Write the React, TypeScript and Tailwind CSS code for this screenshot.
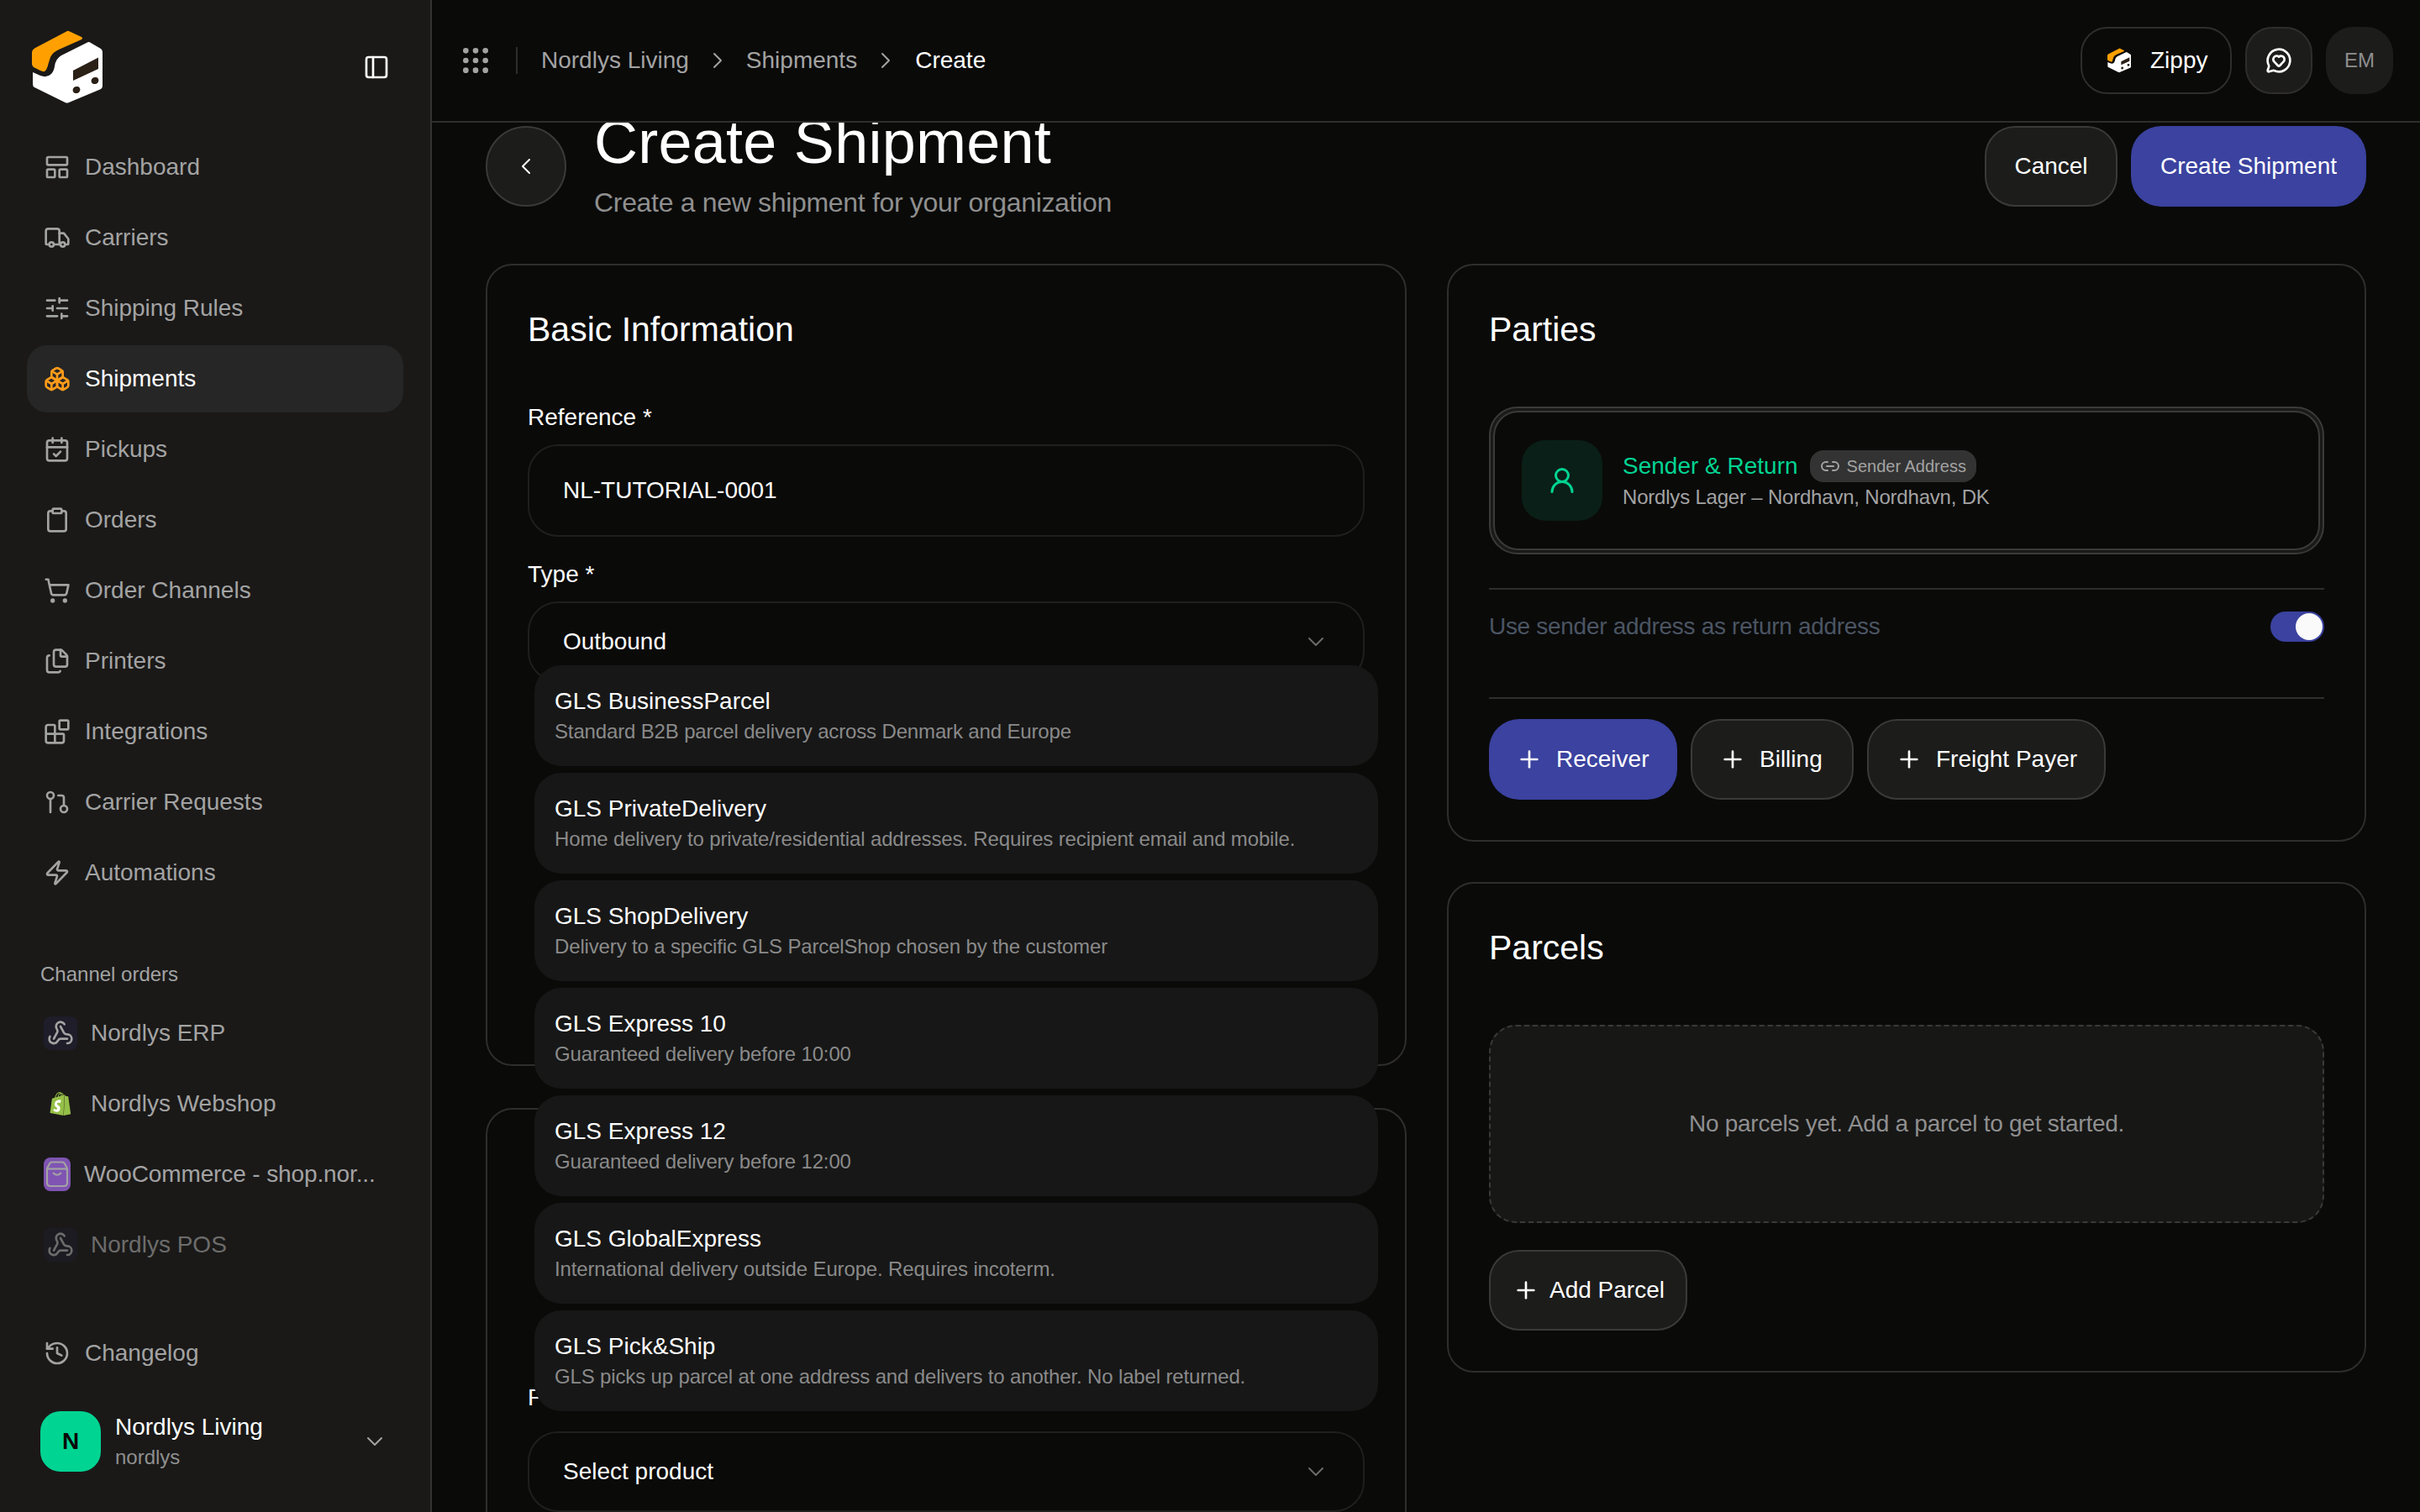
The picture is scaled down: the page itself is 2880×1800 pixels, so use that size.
import {
  Blocks,
  Boxes,
  CalendarCheck,
  ChevronDown,
  ChevronLeft,
  ChevronRight,
  Clipboard,
  Files,
  GitPullRequest,
  Grip,
  History,
  LayoutPanelTop,
  Link2,
  MessageCircleHeart,
  PanelLeft,
  Plus,
  ShoppingCart,
  SlidersHorizontal,
  Truck,
  UserRound,
  Webhook,
  Zap,
} from 'lucide-react';
import { SiShopify } from 'react-icons/si';

const NAV = [
  { label: 'Dashboard', icon: LayoutPanelTop },
  { label: 'Carriers', icon: Truck },
  { label: 'Shipping Rules', icon: SlidersHorizontal },
  { label: 'Shipments', icon: Boxes, active: true },
  { label: 'Pickups', icon: CalendarCheck },
  { label: 'Orders', icon: Clipboard },
  { label: 'Order Channels', icon: ShoppingCart },
  { label: 'Printers', icon: Files },
  { label: 'Integrations', icon: Blocks },
  { label: 'Carrier Requests', icon: GitPullRequest },
  { label: 'Automations', icon: Zap },
];

const PRODUCTS = [
  { name: 'GLS BusinessParcel', desc: 'Standard B2B parcel delivery across Denmark and Europe' },
  { name: 'GLS PrivateDelivery', desc: 'Home delivery to private/residential addresses. Requires recipient email and mobile.' },
  { name: 'GLS ShopDelivery', desc: 'Delivery to a specific GLS ParcelShop chosen by the customer' },
  { name: 'GLS Express 10', desc: 'Guaranteed delivery before 10:00' },
  { name: 'GLS Express 12', desc: 'Guaranteed delivery before 12:00' },
  { name: 'GLS GlobalExpress', desc: 'International delivery outside Europe. Requires incoterm.' },
  { name: 'GLS Pick&Ship', desc: 'GLS picks up parcel at one address and delivers to another. No label returned.' },
];

function Logo({ className }: { className: string }) {
  return (
    <svg viewBox="12 12 96 96" className={className}>
      <path
        d="M60 17 Q61 16.5 63 17.500 L77 24 Q79 25.500 77 27 L50 39 Q43 42 40 48 L37.500 56 Q36 63 33 65 Q31 65.500 28 64 L20 60 Q18 58.500 18 56 L18 43 Q18 39 22 37 Z"
        fill="#ffa000"
      />
      <path
        d="M84 30.500 Q86 29.500 88 31 L100 38 Q102 39.500 102 42 L102 82 Q102 85 99 86.500 L62 102 Q60 103 57.500 102 L21 84 Q19 83 19 80 L19 66 L28 70 Q36 73 41 68 Q44 65 45 59 Q46 50 53 46 Z"
        fill="#ffffff"
      />
      <path d="M67 64 L97 48.500 L97 62 L67 76 Z" fill="#2a2016" />
      <ellipse cx="71" cy="87" rx="4.500" ry="4" transform="rotate(-25 71 87)" fill="#2a2016" />
      <ellipse cx="93" cy="76" rx="4.500" ry="4" transform="rotate(-25 93 76)" fill="#2a2016" />
    </svg>
  );
}

function WooTile() {
  return (
    <span className="w-8 h-10 shrink-0 rounded-[8px] bg-[#7f54b3] flex items-center justify-center">
      <svg viewBox="0 0 32 40" className="w-8 h-10" fill="none" stroke="#a3a3a3" strokeWidth="2.200">
        <path d="M4 13 L7.500 6.500 Q8 5.500 10 5.500 H22 Q24 5.500 24.500 6.500 L28 13 V30 Q28 34 24 34 H8 Q4 34 4 30 Z" />
        <path d="M4 13.500 H28" />
        <path d="M11 18 Q16 23.500 21 18" />
      </svg>
    </span>
  );
}

function Sidebar() {
  return (
    <aside className="w-[514px] h-[1800px] shrink-0 bg-[#1a1918] border-r-2 border-[#333231] flex flex-col">
      <div className="h-[96px] mt-8 ml-8 mr-12 flex items-center justify-between">
        <Logo className="w-24 h-24" />
        <PanelLeft className="w-8 h-8 text-white" strokeWidth={2} />
      </div>

      <nav className="mt-[31px] mx-8 flex flex-col gap-1">
        {NAV.map((item) => (
          <a
            key={item.label}
            className={`h-20 px-5 rounded-[24px] flex items-center gap-[17px] text-[28px] ${
              item.active ? 'bg-[#262626] text-white' : 'text-[#a3a3a3]'
            }`}
          >
            <item.icon className={`w-8 h-8 ${item.active ? 'text-[#ff9c1a]' : 'text-[#a3a3a3]'}`} />
            {item.label}
          </a>
        ))}
      </nav>

      <div className="mt-[65px] ml-12 h-8 leading-8 text-2xl text-[#a3a3a3]">Channel orders</div>

      <div className="mt-[14px] mx-8 flex flex-col gap-1 text-[28px] text-[#a3a3a3]">
        <a className="h-20 pl-5 flex items-center gap-4">
          <span className="w-10 h-10 rounded-[8px] bg-[#1e1d29] flex items-center justify-center">
            <Webhook className="w-8 h-8" />
          </span>
          Nordlys ERP
        </a>
        <a className="h-20 pl-5 flex items-center gap-4">
          <span className="w-10 h-10 flex items-center justify-center relative">
            <span className="absolute left-[11px] top-[14px] w-3 h-4 bg-white" />
            <SiShopify className="w-7 h-8 text-[#95bf47] relative" />
          </span>
          Nordlys Webshop
        </a>
        <a className="h-20 pl-5 flex items-center gap-4">
          <WooTile />
          <span className="whitespace-nowrap tracking-[-0.12px]">WooCommerce - shop.nor...</span>
        </a>
        <a className="h-20 pl-5 flex items-center gap-4 opacity-60">
          <span className="w-10 h-10 rounded-[8px] bg-[#1e1d29] flex items-center justify-center">
            <Webhook className="w-8 h-8" />
          </span>
          Nordlys POS
        </a>
      </div>

      <a className="mt-[49px] mx-8 h-20 px-5 flex items-center gap-[17px] text-[28px] text-[#a3a3a3]">
        <History className="w-8 h-8" />
        Changelog
      </a>

      <div className="mt-[29px] ml-12 mr-[50px] flex items-center">
        <div className="w-[72px] h-[72px] rounded-[24px] bg-[#00d492] flex items-center justify-center text-[28px] font-bold text-[#0a0a09]">
          N
        </div>
        <div className="ml-[17px] flex-1">
          <div className="text-[28px] leading-9 text-white">Nordlys Living</div>
          <div className="mt-[2px] text-2xl leading-8 text-[#8f8f8f]">nordlys</div>
        </div>
        <ChevronDown className="w-8 h-8 text-[#a3a3a3]" strokeWidth={1.500} />
      </div>
    </aside>
  );
}

function Topbar() {
  return (
    <header className="h-[146px] shrink-0 border-b-2 border-[#2f2e2d] pl-8 pr-8 flex items-center justify-between">
      <div className="flex items-center text-[28px] text-[#a3a3a3]">
        <Grip className="w-10 h-10 text-[#a3a3a3]" />
        <span className="w-0.5 h-8 mx-7 bg-[#2f2e2d]" />
        <span>Nordlys Living</span>
        <ChevronRight className="w-8 h-8 mx-[18px]" strokeWidth={1.500} />
        <span>Shipments</span>
        <ChevronRight className="w-8 h-8 mx-[18px] mr-[19px]" strokeWidth={1.500} />
        <span className="text-white">Create</span>
      </div>
      <div className="flex items-center gap-4">
        <button className="h-20 w-[180px] pl-7 rounded-[32px] border-2 border-[#2f2e2d] flex items-center gap-[21px] text-[28px] text-white">
          <Logo className="w-8 h-8" />
          Zippy
        </button>
        <button className="h-20 w-20 rounded-[32px] bg-[#1c1c1b] border-2 border-[#2f2e2d] flex items-center justify-center">
          <MessageCircleHeart className="w-8 h-8 text-white" />
        </button>
        <div className="h-20 w-20 rounded-[32px] bg-[#1c1c1b] flex items-center justify-center text-2xl text-[#8f8f8f]">
          EM
        </div>
      </div>
    </header>
  );
}

function Select({ label, value, gap }: { label: string; value: string; gap: string }) {
  return (
    <div>
      <div className="h-8 leading-8 text-[28px] text-white">{label}</div>
      <div className={`${gap} h-[96px] px-10 rounded-[36px] border-2 border-[#1f1f1e] flex items-center justify-between text-[28px] text-white`}>
        {value}
        <ChevronDown className="w-8 h-8 text-[#6b6b6b]" strokeWidth={1.500} />
      </div>
    </div>
  );
}

function ProductMenu() {
  return (
    <div className="absolute z-10 left-2 top-[124px] w-[1004px] flex flex-col gap-2">
      {PRODUCTS.map((p) => (
        <div key={p.name} className="h-[120px] px-6 rounded-[32px] bg-[#171717] flex flex-col justify-center">
          <div className="text-[28px] leading-9 text-white">{p.name}</div>
          <div className="mt-[2px] text-2xl leading-8 tracking-[-0.15px] text-[#8a8a8a]">{p.desc}</div>
        </div>
      ))}
    </div>
  );
}

function AddButton({ label, className }: { label: string; className: string }) {
  return (
    <button className={`h-24 pl-8 rounded-[36px] flex items-center gap-4 text-[28px] text-white ${className}`}>
      <Plus className="w-8 h-8" />
      {label}
    </button>
  );
}

export default function App() {
  return (
    <div className="w-[2880px] h-[1800px] overflow-hidden flex bg-[#0a0a09] font-['Liberation_Sans',Arial,sans-serif]">
      <Sidebar />
      <div className="flex-1 min-w-0 flex flex-col">
        <Topbar />
        <main className="flex-1 min-h-0 overflow-hidden pt-1 pl-16 pr-16">
          {/* page header, scrolled a little under the top bar */}
          <div className="flex items-start justify-between mb-[53px]">
            <div className="flex items-start gap-[33px]">
              <button className="w-24 h-24 rounded-full bg-[#1c1c1b] border-2 border-[#3a3a39] flex items-center justify-center text-white">
                <ChevronLeft className="w-8 h-8" strokeWidth={1.500} />
              </button>
              <div className="-mt-[21px]">
                <h1 className="text-[72px] leading-[80px] tracking-[0.25px] text-white">Create Shipment</h1>
                <p className="mt-3 text-[32px] leading-10 tracking-[-0.32px] text-[#8f8f8f]">
                  Create a new shipment for your organization
                </p>
              </div>
            </div>
            <div className="flex gap-4">
              <button className="h-24 w-[158px] rounded-[36px] bg-[#1c1c1b] border-2 border-[#3a3a39] text-[28px] text-white">
                Cancel
              </button>
              <button className="h-24 w-[280px] rounded-[36px] bg-[#3b429f] text-[28px] text-white">
                Create Shipment
              </button>
            </div>
          </div>

          <div className="grid grid-cols-[1096px_1094px] gap-x-12 items-start">
            {/* left column */}
            <div className="flex flex-col gap-[50px]">
              <section className="relative z-20 h-[955px] rounded-[32px] border-2 border-[#2f2e2d] px-12 pt-[52px]">
                <h2 className="text-[41px] leading-[48px] text-white">Basic Information</h2>
                <div className="mt-[65px] h-8 leading-8 text-[28px] text-white">Reference *</div>
                <div className="mt-4 h-[110px] pl-10 rounded-[36px] border-2 border-[#1f1f1e] flex items-center text-[28px] text-white">
                  NL-TUTORIAL-0001
                </div>
                <div className="mt-[29px] relative">
                  <Select label="Type *" value="Outbound" gap="mt-4" />
                  <ProductMenu />
                </div>
              </section>
              <section className="h-[600px] rounded-[32px] border-2 border-[#2f2e2d] px-12 pt-[327px]">
                <Select label="Product *" value="Select product" gap="mt-6" />
              </section>
            </div>

            {/* right column */}
            <div className="flex flex-col gap-12">
              <section className="rounded-[32px] border-2 border-[#2f2e2d] px-12 pt-[52px] pb-12">
                <h2 className="text-[41px] leading-[48px] text-white">Parties</h2>
                <div className="mt-[68px] h-[176px] p-[3px] rounded-[34px] border-2 border-[#3a3a39] bg-[#1a1a19]">
                  <div className="h-full pl-8 rounded-[30px] border-2 border-[#3a3a39] bg-[#0a0a09] flex items-center gap-6">
                    <div className="w-24 h-24 rounded-[28px] bg-[#0a1f17] flex items-center justify-center">
                      <UserRound className="w-9 h-9 text-[#00d492]" />
                    </div>
                    <div>
                      <div className="flex items-center gap-[14px]">
                        <span className="text-[28px] leading-9 text-[#00d492]">Sender &amp; Return</span>
                        <span className="h-[38px] px-3 rounded-[16px] bg-[#333333] flex items-center gap-2 text-xl text-[#a3a3a3]">
                          <Link2 className="w-6 h-6" />
                          Sender Address
                        </span>
                      </div>
                      <div className="mt-[2px] text-2xl leading-8 tracking-[-0.2px] text-[#a3a3a3]">
                        Nordlys Lager – Nordhavn, Nordhavn, DK
                      </div>
                    </div>
                  </div>
                </div>
                <div className="mt-10 border-t-2 border-[#2f2e2d] pt-[23px] pb-[63px] flex items-center justify-between">
                  <span className="text-[28px] tracking-[-0.3px] text-[#4b5563]">Use sender address as return address</span>
                  <span className="w-16 h-9 p-0.5 rounded-full bg-[#3b429f] flex justify-end">
                    <span className="w-8 h-8 rounded-full bg-[#fafafa]" />
                  </span>
                </div>
                <div className="border-t-2 border-[#2f2e2d] pt-6 flex gap-4">
                  <AddButton label="Receiver" className="w-[224px] bg-[#3b429f]" />
                  <AddButton label="Billing" className="w-[194px] bg-[#1c1c1b] border-2 border-[#3a3a39]" />
                  <AddButton label="Freight Payer" className="w-[284px] bg-[#1c1c1b] border-2 border-[#3a3a39]" />
                </div>
              </section>

              <section className="rounded-[32px] border-2 border-[#2f2e2d] px-12 pt-[52px] pb-12">
                <h2 className="text-[41px] leading-[48px] text-white">Parcels</h2>
                <div className="mt-[68px] h-[236px] rounded-[32px] border-2 border-dashed border-[#3a3a39] bg-[#171716] flex items-center justify-center text-[28px] tracking-[-0.25px] text-[#8f8f8f]">
                  No parcels yet. Add a parcel to get started.
                </div>
                <button className="mt-8 h-24 w-[236px] pl-[26px] rounded-[36px] bg-[#1c1c1b] border-2 border-[#3a3a39] flex items-center gap-[12px] text-[28px] text-white">
                  <Plus className="w-8 h-8" />
                  Add Parcel
                </button>
              </section>
            </div>
          </div>
        </main>
      </div>
    </div>
  );
}
